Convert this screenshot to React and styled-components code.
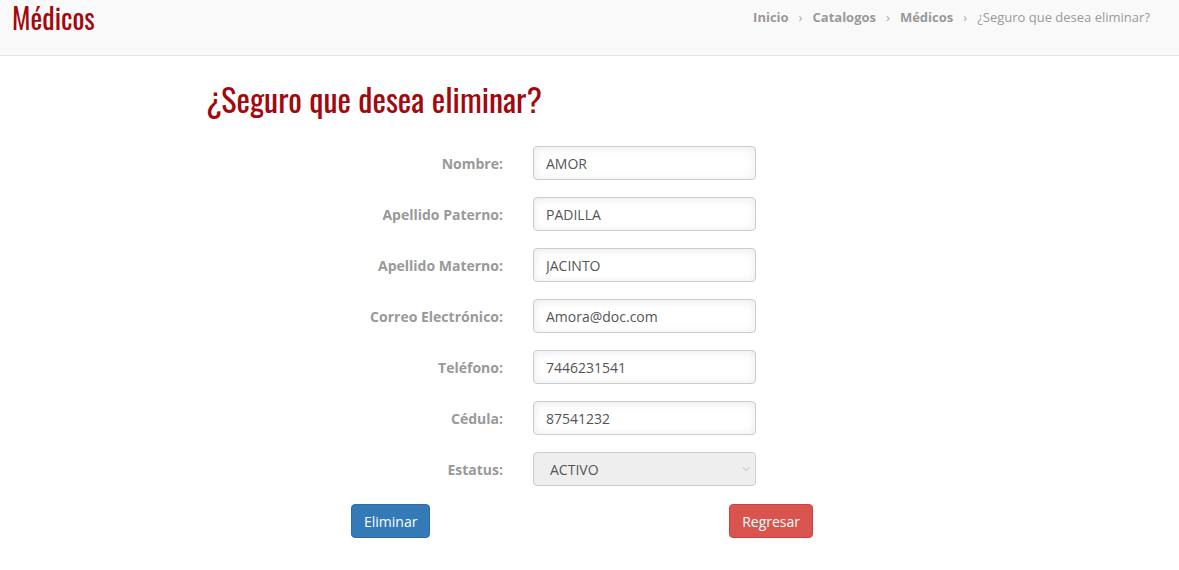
import React from 'react'
import styled, { createGlobalStyle } from 'styled-components'
import { ChevronDown } from 'lucide-react'

const GlobalStyle = createGlobalStyle`
    body {
        margin: 0;
        background: #fff;
        font-family: "Open Sans", "Liberation Sans", sans-serif;
        font-size: 14px;
        color: #555;
    }
`;

const red = "#a3080c";
const condensed = `"Oswald", "Liberation Sans Narrow", "DejaVu Sans Condensed", "Roboto", sans-serif`;

const Header = styled.header`
    height: 56px;
    box-sizing: border-box;
    background: #f9f9f9;
    border-bottom: 1px solid #e3e3e3;
    display: flex;
    justify-content: space-between;
    align-items: flex-start;
    padding: 0 29px 0 12px;
`;

const PageTitle = styled.h1`
    margin: 0;
    font-family: ${condensed};
    font-weight: normal;
    font-size: 28px;
    line-height: 36px;
    color: ${red};
`;

const Crumbs = styled.ol`
    list-style: none;
    margin: 0;
    padding: 8px 0 0;
    display: flex;
    font-size: 13px;
    color: #999;
`;

const Crumb = styled.li`
    font-weight: ${props => props.active ? "normal" : "bold"};

    &:not(:first-child)::before {
        content: "›";
        font-weight: normal;
        color: #aaa;
        padding: 0 10px 0 10px;
    }
`;

const Main = styled.main`
    padding: 23px 0 0 206px;
`;

const Title = styled.h2`
    margin: 0 0 27px;
    font-family: ${condensed};
    font-weight: normal;
    font-size: 32px;
    line-height: 40px;
    color: ${red};
`;

const Form = styled.form`
    display: grid;
    grid-template-columns: 297px 223px;
    column-gap: 30px;
    row-gap: 17px;
    align-items: center;
`;

const Label = styled.label`
    text-align: right;
    font-weight: bold;
    color: #999;
`;

const Input = styled.input`
    box-sizing: border-box;
    width: 100%;
    height: 34px;
    padding: 0 12px;
    border: 1px solid #ccc;
    border-radius: 4px;
    background: #fff;
    box-shadow: inset 0 1px 10px rgba(0, 0, 0, 0.09);
    font: inherit;
    color: #555;
    outline: none;
`;

const SelectWrap = styled.div`
    position: relative;

    svg {
        position: absolute;
        right: 4px;
        top: 11px;
        color: #bbb;
        pointer-events: none;
    }
`;

const Select = styled.select`
    box-sizing: border-box;
    width: 100%;
    height: 34px;
    padding: 0 16px;
    border: 1px solid #ccc;
    border-radius: 4px;
    background: #eee;
    font: inherit;
    color: #555;
    appearance: none;
    opacity: 1;
`;

const Actions = styled.div`
    display: flex;
    justify-content: space-between;
    width: 462px;
    margin: 18px 0 0 145px;
`;

const Button = styled.button`
    height: 34px;
    padding: 0 12px;
    border: 1px solid ${props => props.danger ? "#d43f3a" : "#2e6da4"};
    border-radius: 4px;
    background: ${props => props.danger ? "#d9534f" : "#337ab7"};
    color: #fff;
    font-family: "Open Sans", sans-serif;
    font-size: 14px;
    cursor: pointer;
`;

const fields = [
    { name: "Nombre", value: "AMOR" },
    { name: "Apellido Paterno", value: "PADILLA" },
    { name: "Apellido Materno", value: "JACINTO" },
    { name: "Correo Electrónico", value: "Amora@doc.com" },
    { name: "Teléfono", value: "7446231541" },
    { name: "Cédula", value: "87541232" },
];

export default function App() {
    return (
        <>
            <GlobalStyle />
            <Header>
                <PageTitle>Médicos</PageTitle>
                <Crumbs>
                    <Crumb>Inicio</Crumb>
                    <Crumb>Catalogos</Crumb>
                    <Crumb>Médicos</Crumb>
                    <Crumb active>¿Seguro que desea eliminar?</Crumb>
                </Crumbs>
            </Header>
            <Main>
                <Title>¿Seguro que desea eliminar?</Title>
                <Form onSubmit={e => e.preventDefault()}>
                    {fields.map((field, index) => (
                        <React.Fragment key={"field-" + index}>
                            <Label>{field.name}:</Label>
                            <Input readOnly value={field.value} />
                        </React.Fragment>
                    ))}
                    <Label>Estatus:</Label>
                    <SelectWrap>
                        <Select disabled defaultValue="1">
                            <option value="1">ACTIVO</option>
                        </Select>
                        <ChevronDown size={12} />
                    </SelectWrap>
                </Form>
                <Actions>
                    <Button>Eliminar</Button>
                    <Button danger>Regresar</Button>
                </Actions>
            </Main>
        </>
    )
}
